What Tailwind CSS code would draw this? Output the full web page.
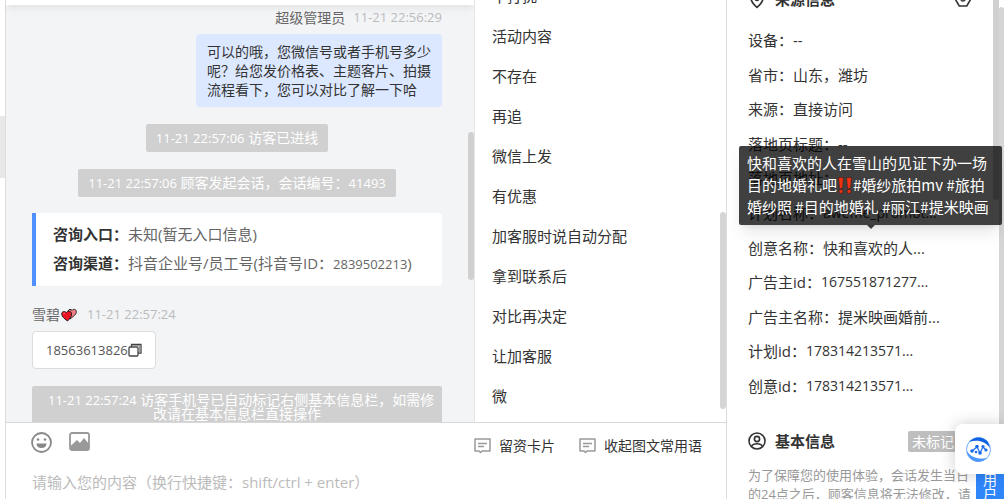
<!DOCTYPE html>
<html lang="zh-CN">
  <head>
    <meta charset="UTF-8" />
    <meta name="viewport" content="width=device-width, initial-scale=1.0" />
    <title>客服会话</title>
    <script src="https://cdn.jsdelivr.net/npm/@tailwindcss/browser@4"></script>
  </head>
  <body
    class="flex h-screen overflow-hidden bg-white text-[#333] text-[15px] leading-5 font-['Open_Sans','Noto_Sans_CJK_SC',sans-serif]"
  >
    <!-- page edge -->
    <div class="w-[5px] shrink-0 pt-[116px]">
      <div class="h-[62px] bg-[#e8e8e8]"></div>
    </div>

    <main class="flex min-w-0 flex-1 flex-col border-x border-[#dcdcdc]">
      <div class="flex min-h-0 flex-1">
        <!-- chat -->
        <section class="relative flex min-w-0 flex-1 flex-col bg-[#f3f4f6] text-sm">
          <header class="h-[5px] shrink-0 bg-white shadow-md"></header>
          <div class="min-h-0 flex-1 overflow-hidden pt-[3px] pr-8 pl-[26px]">
            <div class="flex justify-end gap-2 text-[#666]">
              <span>超级管理员</span>
              <time class="text-[13px] text-[#bbb]">11-21 22:56:29</time>
            </div>
            <div class="mt-[6px] ml-auto w-[246px] rounded bg-[#dce8ff] px-[11px] py-2 leading-[19px] whitespace-nowrap">
              可以的哦，您微信号或者手机号多少<br />呢？给您发价格表、主题客片、拍摄<br />流程看下，您可以对比了解一下哈
            </div>

            <div class="mt-[17px] flex justify-center">
              <p class="rounded-xs bg-[#d0d0d0] px-[10px] leading-7 text-white">
                <span class="text-[13px]">11-21 22:57:06</span> 访客已进线
              </p>
            </div>
            <div class="mt-[17px] flex justify-center">
              <p class="rounded-xs bg-[#d0d0d0] px-[10px] leading-7 text-white">
                <span class="text-[13px]">11-21 22:57:06</span> 顾客发起会话，会话编号：<span class="text-[13px]">41493</span>
              </p>
            </div>

            <div class="mt-4 rounded-r-sm border-l-4 border-[#5090ff] bg-white px-[17px] py-[7px] text-[15px] leading-[29px] whitespace-nowrap text-[#666]">
              <p><b class="text-[#333]">咨询入口：</b>未知(暂无入口信息)</p>
              <p><b class="text-[#333]">咨询渠道：</b>抖音企业号/员工号(抖音号ID：<span class="text-[13px]">2839502213</span>)</p>
            </div>

            <div class="mt-[19px] flex text-[#666]">
              <span>雪碧</span>
              <svg class="mt-[3px] mr-[10px] ml-px" width="16" height="14" viewBox="0 0 16 14" aria-label="双心">
                <path d="M9 11C6 8 6 5 7 3c1-2 3-2 4-.6C12.400 .6 15 1.200 15.300 3.400 15.600 6 12.500 8.500 9 11Z" fill="#f08088" stroke="#222" />
                <path d="M6.500 13C3 10.500.700 8.500.700 5.800.700 3.500 3.600 2.700 5.300 4.600 6.800 2.500 10 3 10.500 5.200 11 8 9 10.500 6.500 13Z" fill="#ee1122" stroke="#222" />
                <path d="M2.500 6.200q.2-1 1.200-1" stroke="#ff9aa2" fill="none" />
              </svg>
              <time class="text-[13px] text-[#bbb]">11-21 22:57:24</time>
            </div>
            <div class="mt-[6px] inline-flex h-[38px] items-center rounded border border-[#dcdcdc] bg-white px-[13px] text-[13px] text-[#555]">
              18563613826
              <button type="button" aria-label="复制">
                <svg class="block" width="14" height="14" viewBox="0 0 14 14" fill="none" stroke="#444" stroke-width="1.300">
                  <rect x="1" y="4" width="9" height="9" rx="1" />
                  <path d="M3.500 4V1.300h9.500V10h-3" />
                  <path d="M4 2.700h7.600V10" stroke="#999" />
                </svg>
              </button>
            </div>

            <p class="mt-[17px] rounded-xs bg-[#d0d0d0] px-4 pt-[7px] pb-2 text-center leading-[14px] whitespace-nowrap text-white">
              <span class="text-[13px]">11-21 22:57:24</span> 访客手机号已自动标记右侧基本信息栏，如需修<br />改请在基本信息栏直接操作
            </p>
          </div>
          <div class="absolute top-[132px] right-0 h-[148px] w-[6px] rounded-full bg-[#d0d0d0]"></div>
        </section>

        <!-- quick tags -->
        <section class="relative w-[252px] shrink-0 overflow-hidden border-l border-[#e4e6ea]">
          <ul class="-mt-6 px-[17px] leading-10">
            <li>不打扰</li>
            <li>活动内容</li>
            <li>不存在</li>
            <li>再追</li>
            <li>微信上发</li>
            <li>有优惠</li>
            <li>加客服时说自动分配</li>
            <li>拿到联系后</li>
            <li>对比再决定</li>
            <li>让加客服</li>
            <li>微</li>
          </ul>
          <div class="absolute top-[212px] right-0 h-[197px] w-[6px] rounded-full bg-[#d5d5d5]"></div>
        </section>
      </div>

      <!-- composer -->
      <footer class="h-[77px] shrink-0 border-t border-[#d8d8d8] pr-6 pl-[25px]">
        <div class="flex items-start gap-4 pt-[9px] text-sm">
          <button type="button" aria-label="表情">
            <svg class="block" width="22" height="22" viewBox="0 0 22 22">
              <circle cx="10.500" cy="10.500" r="9.500" fill="none" stroke="#888" stroke-width="1.800" />
              <circle cx="7" cy="7.500" r="1.300" fill="#888" />
              <circle cx="14" cy="7.500" r="1.300" fill="#888" />
              <path d="M5.500 11.500h10c0 3-2 4.500-5 4.500s-5-1.500-5-4.500Z" fill="#888" />
            </svg>
          </button>
          <button type="button" aria-label="图片">
            <svg class="block" width="22" height="20" viewBox="0 0 22 20">
              <rect x="1" y="1" width="19" height="17" rx="2" fill="#fff" stroke="#999" stroke-width="1.800" />
              <path d="M1.500 14 8 8l3 3 4-5 5 6v6H1.500Z" fill="#999" />
            </svg>
          </button>
          <div class="flex flex-1 justify-end gap-6 pt-1">
            <button type="button" class="flex items-center gap-2">
              <svg width="17" height="16" viewBox="0 0 17 16" fill="none" stroke="#999" stroke-width="1.500">
                <path d="M1 1h15v12H8l-1.500 1.500L5 13H1Z" stroke-linejoin="round" />
                <path d="M4 5.500h9M4 8.500h6" />
              </svg>
              留资卡片
            </button>
            <button type="button" class="flex items-center gap-2">
              <svg width="17" height="16" viewBox="0 0 17 16" fill="none" stroke="#999" stroke-width="1.500">
                <path d="M1 1h15v12H8l-1.500 1.500L5 13H1Z" stroke-linejoin="round" />
                <path d="M4 5.500h9M4 8.500h6" />
              </svg>
              收起图文常用语
            </button>
          </div>
        </div>
        <textarea
          class="mt-4 block h-6 w-full resize-none overflow-hidden pl-px text-[15px] leading-5 outline-none placeholder:text-[#bbb]"
          aria-label="消息内容"
          placeholder="请输入您的内容（换行快捷键：shift/ctrl + enter）"
        ></textarea>
      </footer>
    </main>

    <!-- visitor info -->
    <aside class="relative flex w-[277px] shrink-0 overflow-hidden">
      <div class="-mt-[11px] min-w-0 flex-1 pr-6 pl-[21px] whitespace-nowrap">
        <div class="flex items-center">
          <svg width="18" height="20" viewBox="0 0 18 20" fill="none" stroke="#333" stroke-width="1.600">
            <path d="M9 18.500C5 15 2.800 12 2.800 8.500a6.200 6.200 0 0 1 12.400 0c0 3.500-2.200 6.500-6.200 10Z" />
            <circle cx="9" cy="10" r="1.500" />
          </svg>
          <h2 class="ml-[9px] flex-1 font-bold">来源信息</h2>
          <button type="button" aria-label="设置" class="mr-2">
            <svg class="block" width="18" height="18" viewBox="0 0 18 18" fill="none" stroke="#333" stroke-width="1.600">
              <path d="M5.200 2h7.600L16.800 9l-4 7H5.200L1.200 9Z" />
              <circle cx="9" cy="9" r="2" />
            </svg>
          </button>
        </div>

        <dl class="mt-[21px] flex h-[366px] flex-col justify-between">
          <div class="flex"><dt>设备：</dt><dd>--</dd></div>
          <div class="flex"><dt>省市：</dt><dd>山东，潍坊</dd></div>
          <div class="flex"><dt>来源：</dt><dd>直接访问</dd></div>
          <div class="flex"><dt>落地页标题：</dt><dd>--</dd></div>
          <div class="flex"><dt>落地页地址：</dt><dd></dd></div>
          <div class="flex"><dt>计划名称：</dt><dd class="text-sm leading-5">aweme_promot...</dd></div>
          <div class="flex"><dt>创意名称：</dt><dd>快和喜欢的人...</dd></div>
          <div class="flex"><dt>广告主id：</dt><dd class="text-sm leading-5">167551871277...</dd></div>
          <div class="flex"><dt>广告主名称：</dt><dd>提米映画婚前...</dd></div>
          <div class="flex"><dt>计划id：</dt><dd class="text-sm leading-5">178314213571...</dd></div>
          <div class="flex"><dt>创意id：</dt><dd class="text-sm leading-5">178314213571...</dd></div>
        </dl>

        <div class="mt-[34px] flex h-[22px] items-center">
          <svg width="18" height="18" viewBox="0 0 18 18" fill="none" stroke="#333" stroke-width="1.600">
            <circle cx="9" cy="9" r="8" />
            <circle cx="9" cy="7" r="2.600" />
            <path d="M3.500 14.500c1-2.200 3-2.700 5.500-2.700s4.500.5 5.500 2.700" />
          </svg>
          <h2 class="ml-[9px] font-bold">基本信息</h2>
          <span class="ml-[73px] rounded-xs bg-[#bebebe] px-1 text-sm leading-[21px] text-white">未标记</span>
        </div>
        <p class="mt-[14px] text-[13px] leading-[19px] text-[#999]">
          为了保障您的使用体验，会话发生当日<br />的24点之后，顾客信息将无法修改，请
        </p>
      </div>

      <!-- scrollbars -->
      <div class="absolute -top-2 right-[5px] h-[208px] w-[6px] rounded-full bg-[#d0d0d0]"></div>
      <div class="absolute top-[7px] right-0 bottom-0 w-[5px] rounded-t-sm bg-[#d5d5d5]"></div>

      <!-- tooltip -->
      <div
        role="tooltip"
        class="absolute top-[146px] right-[2px] w-[263px] rounded-xs bg-black/75 px-2 pt-[6px] pb-[7px] leading-[22px] whitespace-nowrap text-white shadow-lg font-['Noto_Sans_CJK_SC',sans-serif]"
      >
        快和喜欢的人在雪山的见证下办一场<br />目的地婚礼吧<svg class="inline-block align-[-3px]" width="16" height="17" viewBox="0 0 16 17" aria-label="双感叹号">
          <g fill="#ee3214" stroke="#2a1510" stroke-width=".5">
            <path d="M1.500.500h5L5.500 11.500h-3ZM9.500.500h5l-1 11h-3Z" />
            <circle cx="4" cy="14.500" r="2" />
            <circle cx="12" cy="14.500" r="2" />
          </g></svg>#婚纱旅拍mv #旅拍<br />婚纱照 #目的地婚礼 #丽江#提米映画
        <div class="absolute top-full left-1/2 -ml-1 border-x-4 border-t-4 border-x-transparent border-t-black/75"></div>
      </div>

      <!-- floating helper -->
      <button type="button" class="absolute right-0 -bottom-0.5 w-7 bg-[#2f86fb] px-[7px] text-sm leading-[14px] text-white">
        用户
      </button>
      <button
        type="button"
        aria-label="助手"
        class="absolute right-0 bottom-[25px] flex h-[50px] w-[49px] items-center rounded-l-lg bg-white pl-[11px] shadow-[0_0_16px_rgba(0,0,0,0.2)]"
      >
        <svg width="25" height="25" viewBox="0 0 25 25">
          <circle cx="12.500" cy="12.500" r="12" fill="#fff" stroke="#4a94fb" stroke-width=".8" />
          <path d="M3 5C8-1 17-1 22 5l2 6C19 4 11 2.500 3 5Z" fill="#0f62e0" />
          <path d="M1 14c4 7 12 8.500 20 7-5 5-13 5-17 0-2-2-3-4-3-7Z" fill="#4c98fc" />
          <path d="M6 14l5-4 3 6 3-6 3 3" fill="none" stroke="#1a6aec" stroke-width="1.200" />
          <g fill="#1a6aec">
            <circle cx="6" cy="14" r="1.800" />
            <circle cx="11" cy="9.500" r="1.800" />
            <circle cx="14" cy="16" r="1.800" />
            <circle cx="17" cy="9.500" r="1.600" />
            <circle cx="20" cy="13" r="1.600" />
            <circle cx="10" cy="15" r="1.300" />
          </g>
        </svg>
      </button>
    </aside>
  </body>
</html>
